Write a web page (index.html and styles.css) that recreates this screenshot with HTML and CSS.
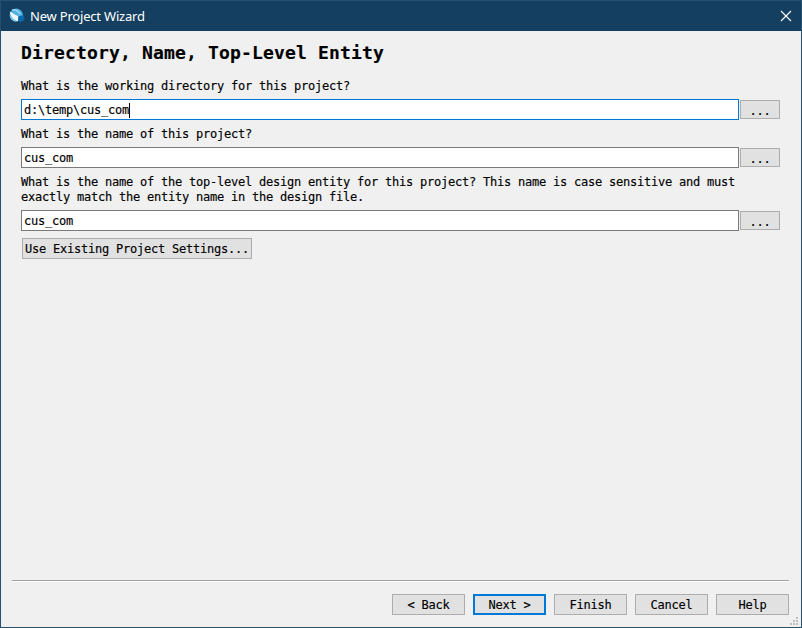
FILE: index.html
```html
<!DOCTYPE html>
<html lang="en">
<head>
<meta charset="utf-8">
<title>New Project Wizard</title>
<link rel="stylesheet" href="styles.css">
</head>
<body>
<div class="window">
  <header class="titlebar">
    <svg class="logo" width="16" height="16" viewBox="0 0 16 16">
      <circle cx="7.300" cy="7" r="6.500" fill="#4fb0e2"/>
      <path d="M.8 3.500C3.500 4.500 5.500 7 9 8L9.500 12.800C8.500 13.500 7 13 5.500 11.800C3 10 1 7 .8 3.500Z" fill="#f1f8fc"/>
      <path d="M.8 6.500C2 9.500 4.500 12 8 13.500C3.500 14 .3 10.500 .8 6.500Z" fill="#79c4ea"/>
      <path d="M3 2.300C6 1 9 3 11 6" fill="none" stroke="#9bd8f5" stroke-width="1.500"/>
      <path d="M9.500 8.300L14.800 7.300L15.500 11.800L11.500 14.200L9 12.800Z" fill="#0868aa"/>
    </svg>
    <span class="caption">New Project Wizard</span>
    <svg class="close" width="12" height="12" viewBox="0 0 12 12"><path d="M1 1L11 11M11 1L1 11" stroke="#fff" stroke-width="1.150" fill="none"/></svg>
  </header>
  <main class="page">
    <h1>Directory, Name, Top-Level Entity</h1>
    <p class="label">What is the working directory for this project?</p>
    <div class="row"><div class="field focused">d:\temp\cus_com<span class="caret"></span></div><button class="browse">...</button></div>
    <p class="label">What is the name of this project?</p>
    <div class="row"><div class="field">cus_com</div><button class="browse">...</button></div>
    <p class="label">What is the name of the top-level design entity for this project? This name is case sensitive and must<br>exactly match the entity name in the design file.</p>
    <div class="row"><div class="field">cus_com</div><button class="browse">...</button></div>
    <button class="existing">Use Existing Project Settings...</button>
  </main>
  <footer class="actions">
    <button>&lt; Back</button>
    <button class="default">Next &gt;</button>
    <button>Finish</button>
    <button>Cancel</button>
    <button>Help</button>
  </footer>
  <svg class="grip" width="8" height="8" viewBox="0 0 8 8" fill="#bfbfbf"><path d="M6 0h2v2H6zM3 3h2v2H3zM6 3h2v2H6zM0 6h2v2H0zM3 6h2v2H3zM6 6h2v2H6z"/></svg>
</div>
</body>
</html>
```
FILE: styles.css
```css
* { box-sizing: border-box; }
body { margin: 0; }
.window {
  position: relative;
  display: flex;
  flex-direction: column;
  width: 802px;
  height: 628px;
  border: 1px solid #26506f;
  background: #f0f0f0;
  color: #000;
  font: 12px/15px "DejaVu Sans Mono", monospace;
  letter-spacing: -0.224px;
  -webkit-text-stroke: 0.15px;
}
.titlebar {
  display: flex;
  align-items: center;
  height: 30px;
  padding: 0 9px 0 8px;
  background: #153f60;
  color: #fff;
  -webkit-text-stroke: 0;
}
.caption {
  flex: 1;
  margin-left: 5px;
  font: 13px/18px "Noto Sans", sans-serif;
  letter-spacing: -0.2px;
}
.page {
  flex: 1;
  padding: 11px 21px 0 20px;
}
h1 {
  margin: 0 0 15px;
  font-size: 18px;
  line-height: 22px;
  letter-spacing: 0.163px;
}
.label {
  margin: 0 0 5px;
  white-space: nowrap;
}
.row {
  display: flex;
  align-items: center;
  gap: 1px;
  margin-bottom: 7px;
}
.field {
  display: flex;
  align-items: center;
  flex: 1;
  height: 21px;
  padding: 2px 0 0 2px;
  border: 1px solid #7a7a7a;
  background: #fff;
}
.focused { border-color: #0078d7; }
.caret {
  width: 1px;
  height: 15px;
  margin-top: -1px;
  background: #000;
}
button {
  padding: 2px 0 0;
  border: 1px solid #adadad;
  border-radius: 0;
  background: #e1e1e1;
  color: inherit;
  font: inherit;
  letter-spacing: inherit;
}
.browse {
  width: 40px;
  height: 19px;
  padding-top: 2px;
  line-height: 16px;
}
.existing {
  display: block;
  width: 230px;
  height: 21px;
  margin: 7px 0 0 1px;
}
.actions {
  display: flex;
  justify-content: flex-end;
  gap: 8px;
  height: 47px;
  margin: 0 12px 0 11px;
  padding-top: 13px;
  border-top: 1px solid #a0a0a0;
  box-shadow: inset 0 1px #fff;
}
.actions button {
  width: 73px;
  height: 21px;
}
.actions .default { border: 2px solid #0078d7; }
.grip {
  position: absolute;
  right: 3px;
  bottom: 2px;
}
```
